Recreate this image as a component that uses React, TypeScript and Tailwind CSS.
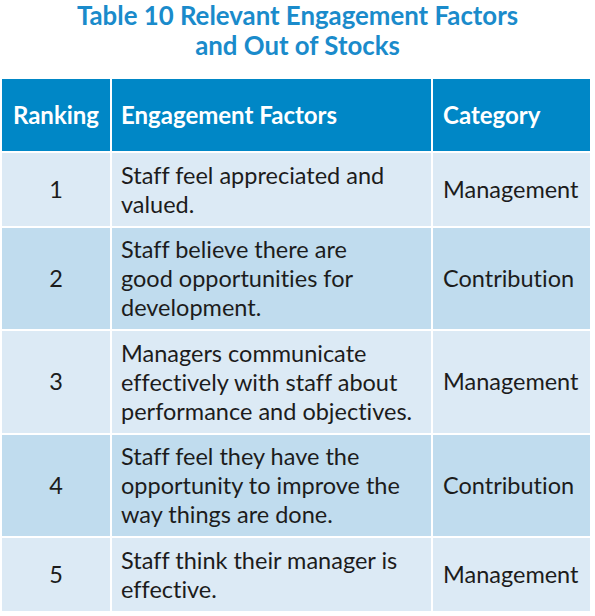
const rows = [
  {
    rank: "1",
    lines: ["Staff feel appreciated and", "valued."],
    category: "Management",
    h: "h-[73px]",
    bg: "bg-[#dceaf5]",
  },
  {
    rank: "2",
    lines: ["Staff believe there are", "good opportunities for", "development."],
    category: "Contribution",
    h: "h-[101px]",
    bg: "bg-[#c0dcee]",
  },
  {
    rank: "3",
    lines: ["Managers communicate", "effectively with staff about", "performance and objectives."],
    category: "Management",
    h: "h-[102px]",
    bg: "bg-[#dceaf5]",
  },
  {
    rank: "4",
    lines: ["Staff feel they have the", "opportunity to improve the", "way things are done."],
    category: "Contribution",
    h: "h-[101px]",
    bg: "bg-[#c0dcee]",
  },
  {
    rank: "5",
    lines: ["Staff think their manager is", "effective."],
    category: "Management",
    h: "h-[73px]",
    bg: "bg-[#dceaf5]",
  },
];

export default function App() {
  return (
    <div className="w-[595px] h-[616px] bg-white font-['Lato',sans-serif] text-[#1c1c1c] [font-variant-ligatures:none]">
      {/* title */}
      <h1 className="text-center text-[25.8px] font-bold leading-[30px] text-[#1a8bcb]">
        Table 10 Relevant Engagement Factors
        <br />
        and Out of Stocks
      </h1>

      {/* table */}
      <div className="mt-[19px] ml-[2px] grid w-[588px] grid-cols-[108px_319px_157px] gap-[2px] bg-white">
        <div className="flex h-[72px] items-center justify-center bg-[#0087c6] text-[24px] font-bold text-white">
          Ranking
        </div>
        <div className="flex h-[72px] items-center bg-[#0087c6] pl-[9px] text-[24px] font-bold text-white">
          Engagement Factors
        </div>
        <div className="flex h-[72px] items-center bg-[#0087c6] pl-[10px] text-[24px] font-bold text-white">
          Category
        </div>

        {rows.map((r) => (
          <div key={r.rank} className="contents">
            <div className={`flex items-center justify-center text-[23.5px] ${r.h} ${r.bg}`}>
              {r.rank}
            </div>
            <div className={`flex flex-col justify-center pl-[9px] text-[23.5px] leading-[29px] ${r.h} ${r.bg}`}>
              {r.lines.map((l) => (
                <span key={l} className="whitespace-nowrap">
                  {l}
                </span>
              ))}
            </div>
            <div className={`flex items-center pl-[10px] text-[23.5px] ${r.h} ${r.bg}`}>
              {r.category}
            </div>
          </div>
        ))}
      </div>
    </div>
  );
}
